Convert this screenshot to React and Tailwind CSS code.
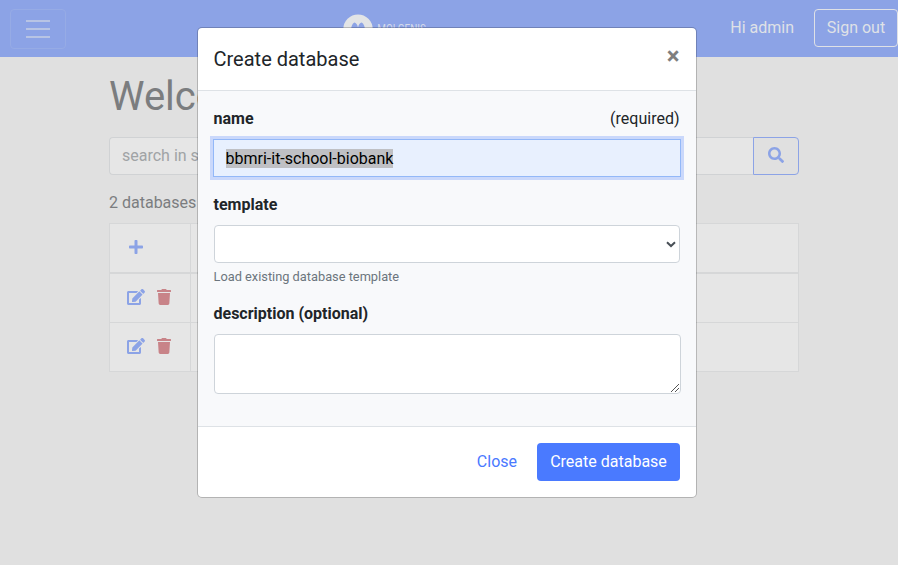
import React from "react";
import { FaPlus, FaEdit, FaTrash, FaSearch } from "react-icons/fa";

function NavBar() {
  return (
    <nav className="relative flex h-[57px] items-center bg-[#8ca3e6] pl-[10px] text-[#dfe1e6]">
      <button className="flex h-10 w-14 flex-col items-center justify-center gap-[6px] rounded border border-[#96abe5]">
        <span className="h-[2px] w-6 bg-[#b8c4e4]" />
        <span className="h-[2px] w-6 bg-[#b8c4e4]" />
        <span className="h-[2px] w-6 bg-[#b8c4e4]" />
      </button>
      <svg className="ml-[277px] h-[30px] w-[84px]" viewBox="0 0 84 30">
        <circle cx="15" cy="15.2" r="14.7" fill="#e2e4e6" />
        <path d="M7 22 Q8 9.5 11.3 8.6 Q14 9 15 13.5 Q16 9 18.7 8.6 Q22 9.5 23 22 Z" fill="#8ca3e6" />
        <text x="34.3" y="18.6" fontFamily="Roboto, sans-serif" fontSize="13" textLength="48.5" lengthAdjust="spacingAndGlyphs" fill="#d4daea">MOLGENIS</text>
      </svg>
      <div className="ml-auto flex items-center pb-px">
        <span className="mr-5">Hi admin</span>
        <button className="h-[38px] w-[84px] rounded border border-[#dfe1e6] pb-px">Sign out</button>
      </div>
    </nav>
  );
}

function DatabaseRow() {
  return (
    <tr className="h-[49px]">
      <td className="border border-[#d6d7d8] pb-[2px] pl-[17px]">
        <div className="flex items-center gap-3">
          <FaEdit className="h-4 w-[18px] text-[#8ca3e6]" />
          <FaTrash className="h-4 w-[14px] text-[#c88388]" />
        </div>
      </td>
      <td className="border border-[#d6d7d8]" />
    </tr>
  );
}

function Page() {
  return (
    <main className="mx-auto w-[690px] translate-x-[5px] text-[#7b7d7f]">
      <h1 className="pt-[16px] text-[40px] leading-[48px]">Welcome</h1>
      <div className="mt-[16px] flex h-[38px]">
        <div className="flex flex-1 items-center rounded-l border border-r-0 border-[#d0d2d4] bg-[#e6e6e6] pl-3 text-[#a0a3a5]">
          search in schemas
        </div>
        <button className="flex w-[46px] items-center justify-center rounded-r border border-[#8ca3e6] pb-[2px] text-[#8ca3e6]">
          <FaSearch className="h-4 w-4" />
        </button>
      </div>
      <p className="mt-[16px] leading-6">2 databases found</p>
      <table className="mt-[8px] w-full table-fixed border-collapse border border-[#d6d7d8] bg-[#e6e6e6]">
        <colgroup>
          <col className="w-[81px]" />
          <col />
        </colgroup>
        <thead>
          <tr className="h-[49.5px]">
            <th className="border border-b-2 border-[#d6d7d8] pb-[3px] pl-[19px]">
              <FaPlus className="h-4 w-[14px] text-[#8ca3e6]" />
            </th>
            <th className="border border-b-2 border-[#d6d7d8]" />
          </tr>
        </thead>
        <tbody>
          <DatabaseRow />
          <DatabaseRow />
        </tbody>
      </table>
    </main>
  );
}

function CreateDialog() {
  return (
    <section className="absolute left-[197px] top-[27px] flex h-[471px] w-[500px] flex-col overflow-hidden rounded-[5px] border border-black/20 bg-white bg-clip-padding text-[#212529]">
      <header className="flex h-[63px] shrink-0 justify-between border-b border-[#dee2e6] pl-[15.5px] pr-[16.5px]">
        <h5 className="pt-[16px] text-[20px] leading-[30px]">Create database</h5>
        <button className="mt-[16px] h-6 text-[24px] font-bold leading-6 text-[#7f7f7f]">×</button>
      </header>
      <div className="h-[335px] shrink-0 bg-[#f8f9fb] pl-[15.5px] pr-[16.5px] pt-[16px]">
        <div className="flex justify-between leading-6">
          <label className="font-bold">name</label>
          <span>(required)</span>
        </div>
        <div className="mt-[8px] -ml-[0.5px] -mr-[1.5px] flex h-[38px] items-center border border-[#93b8f8] bg-[#e8f0fe] pl-[11.5px] text-black ring-3 ring-[#cad8fb]">
          <span className="bg-[#bfc0c4] leading-[19px]">bbmri-it-school-biobank</span>
        </div>
        <label className="mt-[16px] block font-bold leading-6">template</label>
        <div className="mt-[8px] flex h-[38px] items-center justify-end rounded border border-[#ced4da] bg-white pr-[3px]">
          <svg className="h-[7px] w-[10px]" viewBox="0 0 10 7" fill="none" stroke="#495057" strokeWidth="2">
            <path d="M1 1.2 5 5 9 1.2" />
          </svg>
        </div>
        <small className="mt-[4px] block text-[12.8px] leading-[19px] text-[#6c757d]">Load existing database template</small>
        <label className="mt-[16px] block font-bold leading-6">description (optional)</label>
        <div className="mt-[8px] -mr-px flex h-[60px] items-end justify-end rounded border border-[#ced4da] bg-white p-px">
          <svg className="h-2 w-2" viewBox="0 0 8 8" stroke="#555" strokeWidth="1">
            <path d="M0 8 8 0M4 8 8 4" />
          </svg>
        </div>
      </div>
      <footer className="flex flex-1 items-center justify-end border-t border-[#dee2e6] pr-4">
        <button className="mr-5 text-[#4a79ff]">Close</button>
        <button className="h-[38px] w-[143px] rounded bg-[#4a7aff] text-white">Create database</button>
      </footer>
    </section>
  );
}

export default function App() {
  return (
    <div className="relative h-[565px] w-[898px] overflow-hidden bg-[#e0e0e0] font-[Roboto,sans-serif] text-base">
      <NavBar />
      <Page />
      <CreateDialog />
    </div>
  );
}
